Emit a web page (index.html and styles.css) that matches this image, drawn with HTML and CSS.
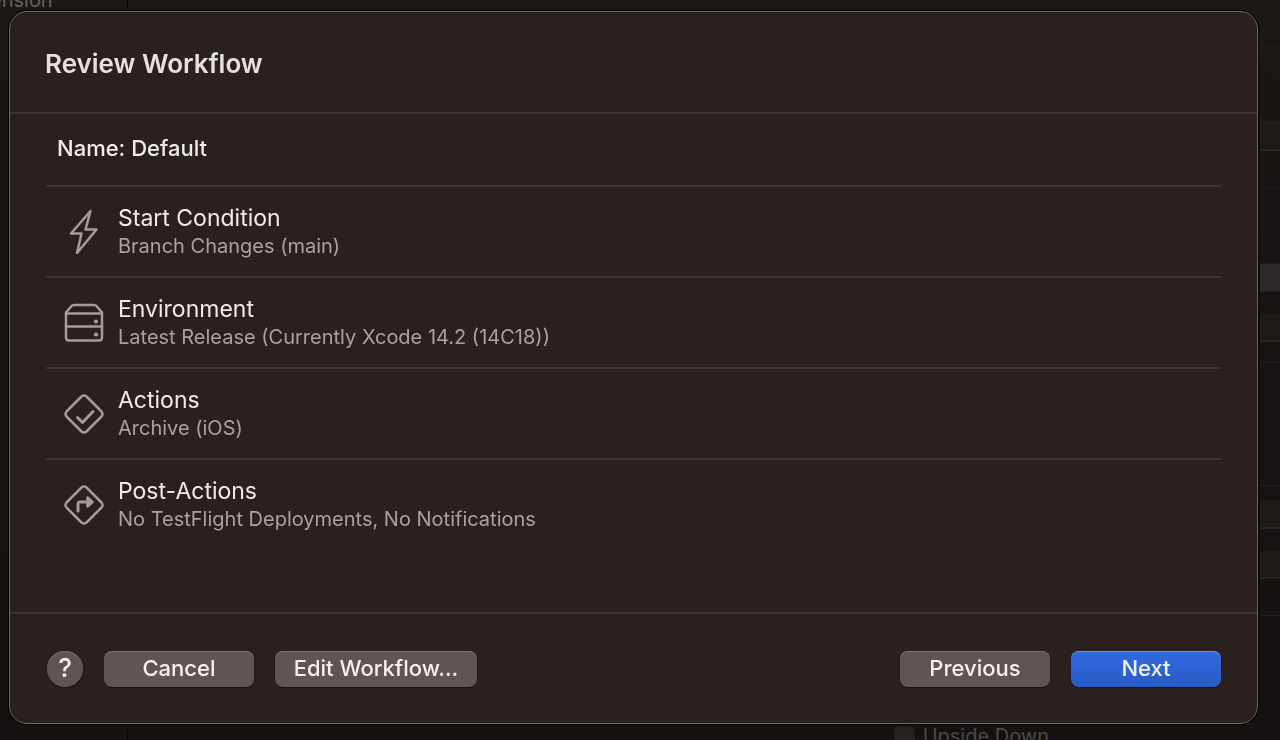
FILE: index.html
```html
<!DOCTYPE html>
<html lang="en">
<head>
  <meta charset="UTF-8">
  <meta name="viewport" content="width=device-width, initial-scale=1">
  <title>Review Workflow</title>
  <link rel="stylesheet" href="styles.css">
</head>
<body>

  <!-- editor window, dimmed behind the sheet -->
  <div class="editor">
    <div class="editor-sidebar">ension</div>
    <div class="editor-main">
      <label class="orientation"><input type="checkbox" disabled> Upside Down</label>
    </div>
    <div class="inspector">
      <div class="group h46"></div>
      <div class="group h76"></div>
      <div class="field"></div>
      <div class="group h36"></div>
      <div class="group h76"></div>
      <div class="field selected"></div>
      <div class="gap"></div>
      <div class="field"></div>
      <div class="group h21"></div>
      <div class="group h123"></div>
      <div class="group h15"></div>
      <div class="field"></div>
      <div class="gap"></div>
      <div class="field"></div>
      <div class="group h36"></div>
    </div>
  </div>

  <main class="overlay">
    <section class="sheet" role="dialog" aria-labelledby="title">
      <header class="sheet-header">
        <h1 id="title">Review Workflow</h1>
      </header>

      <div class="sheet-body">
        <p class="name">Name: Default</p>
        <ul class="steps">
          <li class="step">
            <svg class="icon" viewBox="0 0 48 48">
              <path d="M30.500 3 L11 25.500 H21.500 L17 45 L36.500 21.500 H25.500 Z"/>
            </svg>
            <div>
              <h2>Start Condition</h2>
              <p>Branch Changes (main)</p>
            </div>
          </li>
          <li class="step">
            <svg class="icon" viewBox="0 0 48 48">
              <path d="M6 13.500 L12 6.500 Q13 6 14.500 6 H33.500 Q35 6 36 6.500 L42 13.500 V38.500 Q42 41.500 39 41.500 H9 Q6 41.500 6 38.500 Z"/>
              <path d="M6 14.500 H42 M6 27.500 H42"/>
              <circle class="dot" cx="36" cy="22.500" r="2.100"/>
              <circle class="dot" cx="36" cy="35.500" r="2.100"/>
            </svg>
            <div>
              <h2>Environment</h2>
              <p>Latest Release (Currently Xcode 14.2 (14C18))</p>
            </div>
          </li>
          <li class="step">
            <svg class="icon" viewBox="0 0 48 48">
              <path d="M21.500 6.500 Q24 4.500 26.500 6.500 L41.500 21.500 Q43.500 24 41.500 26.500 L26.500 41.500 Q24 43.500 21.500 41.500 L6.500 26.500 Q4.500 24 6.500 21.500 Z"/>
              <path class="thick" d="M17.500 27.500 L22.500 32.500 L33 21.500"/>
            </svg>
            <div>
              <h2>Actions</h2>
              <p>Archive (iOS)</p>
            </div>
          </li>
          <li class="step">
            <svg class="icon" viewBox="0 0 48 48">
              <path d="M21.500 6.500 Q24 4.500 26.500 6.500 L41.500 21.500 Q43.500 24 41.500 26.500 L26.500 41.500 Q24 43.500 21.500 41.500 L6.500 26.500 Q4.500 24 6.500 21.500 Z"/>
              <path class="thick" d="M18 30 V23 Q18 21 20 21 H27"/>
              <path class="solid" d="M27.500 16.500 L32.500 21 L27.500 25.500 Z"/>
            </svg>
            <div>
              <h2>Post-Actions</h2>
              <p>No TestFlight Deployments, No Notifications</p>
            </div>
          </li>
        </ul>
      </div>

      <footer class="sheet-footer">
        <button type="button" class="help" aria-label="Help">?</button>
        <button type="button">Cancel</button>
        <button type="button" class="edit">Edit Workflow...</button>
        <button type="button" class="previous">Previous</button>
        <button type="button" class="primary">Next</button>
      </footer>
    </section>
  </main>

</body>
</html>
```

FILE: styles.css
```css
* {
  box-sizing: border-box;
}
body {
  margin: 0;
  background: #181412;
  color: #eeecec;
  font-family: Inter, "Liberation Sans", sans-serif;
}
h1, h2, p, ul {
  margin: 0;
  padding: 0;
}

/* editor behind the sheet */
.editor {
  position: fixed;
  inset: 0;
  display: flex;
  overflow: hidden;
  background: linear-gradient(#1c1815, #171413 30%, #151110);
  color: #65615f;
  font-size: 20px;
  line-height: 24px;
}
.editor-sidebar {
  width: 128px;
  margin-top: -12px;
  border-right: 1px solid #0c0a09;
  text-indent: -10px;
}
.editor-main {
  flex: 1;
  display: flex;
  justify-content: flex-end;
  align-items: flex-end;
}
.orientation {
  display: flex;
  align-items: center;
  gap: 8px;
  margin: 0 211px -8px 0;
  color: #4c4846;
}
.orientation input {
  appearance: none;
  width: 21px;
  height: 21px;
  margin: 0;
  border-radius: 5px;
  background: #24201f;
}
.inspector {
  width: 20px;
}
.group {
  border-bottom: 1px solid #221e1c;
}
.h15 { height: 15px; }
.h21 { height: 21px; }
.h36 { height: 37px; }
.h46 { height: 47px; }
.h76 { height: 76px; }
.h123 { height: 123px; }
.gap {
  height: 22px;
}
.field {
  height: 28px;
  background: #1c1917;
  border-bottom: 2px solid #282422;
}
.field.selected {
  background: #2c2928;
}

/* sheet */
.overlay {
  position: relative;
  display: flex;
  min-height: 100vh;
  padding: 11px 22px 16px 9px;
}
.sheet {
  flex: 1;
  display: flex;
  flex-direction: column;
  border: 1px solid #6e6764;
  border-radius: 18px;
  background: #2a201e;
  box-shadow: 0 0 0 1px #000;
}
.sheet-header {
  padding: 36px 35px 32px;
  border-bottom: 2px solid #3d3432;
}
.sheet-header h1 {
  font-size: 26px;
  font-weight: 600;
  line-height: 32px;
  color: #e4e2e1;
}
.sheet-body {
  flex: 1;
  padding: 0 36px;
}
.name {
  padding: 20px 11px 23px;
  font-size: 22px;
  font-weight: 500;
  line-height: 28px;
}
.steps {
  list-style: none;
}
.step {
  display: flex;
  align-items: center;
  gap: 10px;
  height: 91px;
  padding-left: 14px;
  border-top: 2px solid #3d3432;
}
.step h2 {
  font-size: 23px;
  font-weight: 400;
  line-height: 28px;
}
.step p {
  color: #a8a3a1;
  font-size: 20px;
  line-height: 28px;
}
.icon {
  flex: none;
  width: 48px;
  height: 48px;
  fill: none;
  stroke: #a29c9a;
  stroke-width: 2.500;
  stroke-linecap: round;
  stroke-linejoin: round;
}
.icon .thick {
  stroke-width: 3;
}
.icon .dot {
  fill: #a29c9a;
  stroke: none;
}
.icon .solid {
  fill: #a29c9a;
}

.sheet-footer {
  display: flex;
  align-items: center;
  padding: 37px 36px 36px 37px;
  border-top: 2px solid #3d3432;
}
button {
  width: 150px;
  height: 36px;
  padding: 0 0 3px;
  border: 0;
  border-radius: 8px;
  background: #5f5654;
  box-shadow: inset 0 1px #7b7371, 0 1px 1px #1a1312;
  color: #f3f1f1;
  font-family: inherit;
  font-size: 22px;
  font-weight: 500;
  line-height: 28px;
}
.help {
  width: 36px;
  margin-right: 21px;
  border-radius: 50%;
  font-size: 26px;
}
.edit {
  width: 202px;
  margin-left: 21px;
}
.previous {
  margin-left: auto;
}
.primary {
  margin-left: 21px;
  background: linear-gradient(#3069e0, #2b5cc6);
  box-shadow: inset 0 1px #6b92e8, 0 1px 1px #1a1312;
}
```
